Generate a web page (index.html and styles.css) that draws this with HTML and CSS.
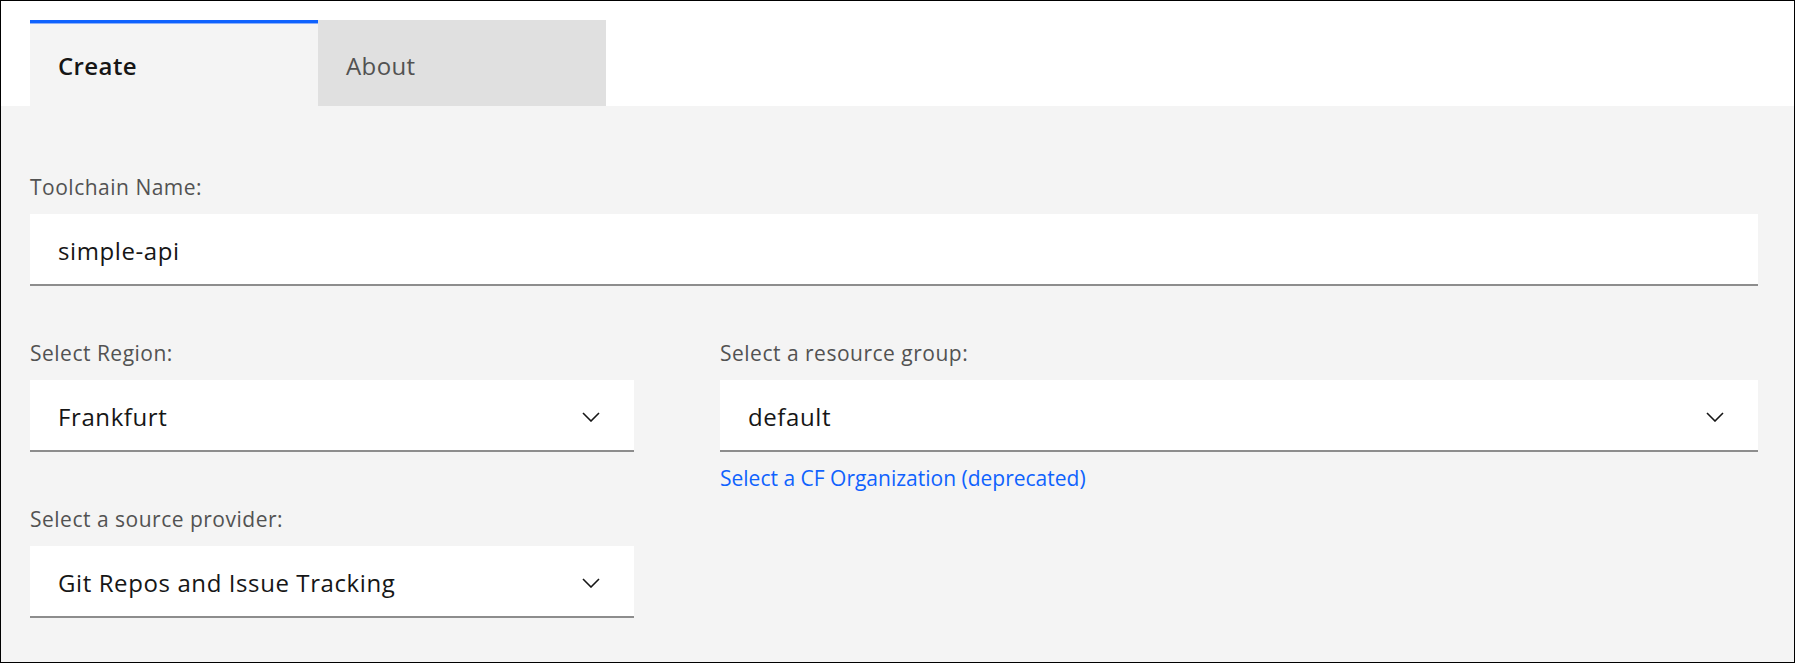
FILE: index.html
```html
<!DOCTYPE html>
<html lang="en">
<head>
<meta charset="utf-8">
<title>Toolchain</title>
<link rel="stylesheet" href="styles.css">
</head>
<body>
<div class="frame">
  <div class="tabs">
    <div class="tab tab-active">Create</div>
    <div class="tab">About</div>
  </div>
  <div class="panel">
    <div class="field">
      <div class="label">Toolchain Name:</div>
      <div class="input">simple-api</div>
    </div>
    <div class="columns">
      <div class="col">
        <div class="field">
          <div class="label">Select Region:</div>
          <div class="input select">
            <span>Frankfurt</span>
            <svg class="chev" width="18" height="10" viewBox="0 0 18 10"><polyline points="1,1 9,9 17,1" fill="none" stroke="#161616" stroke-width="1.6"/></svg>
          </div>
        </div>
        <div class="field">
          <div class="label">Select a source provider:</div>
          <div class="input select">
            <span>Git Repos and Issue Tracking</span>
            <svg class="chev" width="18" height="10" viewBox="0 0 18 10"><polyline points="1,1 9,9 17,1" fill="none" stroke="#161616" stroke-width="1.6"/></svg>
          </div>
        </div>
      </div>
      <div class="col">
        <div class="field">
          <div class="label">Select a resource group:</div>
          <div class="input select">
            <span>default</span>
            <svg class="chev" width="18" height="10" viewBox="0 0 18 10"><polyline points="1,1 9,9 17,1" fill="none" stroke="#161616" stroke-width="1.6"/></svg>
          </div>
          <a class="link" href="#">Select a CF Organization (deprecated)</a>
        </div>
      </div>
    </div>
  </div>
</div>
</body>
</html>
```
FILE: styles.css
```css
* { box-sizing: border-box; }
html, body { margin: 0; padding: 0; background: #fff; }
body { font-family: "Open Sans", Roboto, sans-serif; color: #161616; }

.frame {
  width: 1795px;
  height: 663px;
  border: 1px solid #000;
  display: flex;
  flex-direction: column;
  background: #fff;
}

.tabs {
  display: flex;
  padding: 19px 0 0 29px;
}
.tab {
  width: 288px;
  height: 86px;
  background: #e0e0e0;
  color: #525252;
  font-size: 24px;
  line-height: 30px;
  letter-spacing: 0.4px;
  display: flex;
  align-items: center;
  padding: 6px 0 0 28px;
}
.tab-active {
  background: #f4f4f4;
  color: #161616;
  font-weight: 600;
  border-top: 3px solid #0f62fe;
  box-shadow: inset 0 1px 0 #8db0f9;
  padding-top: 3px;
}

.panel {
  flex: 1;
  background: #f4f4f4;
  padding: 68px 36px 0 29px;
  display: flex;
  flex-direction: column;
  gap: 54px;
}

.field {
  display: flex;
  flex-direction: column;
}
.label {
  font-size: 21px;
  line-height: 27px;
  letter-spacing: 0.5px;
  color: #525252;
  margin-bottom: 13px;
}
.input {
  height: 72px;
  background: #fff;
  border-bottom: 2px solid #8d8d8d;
  font-size: 24px;
  line-height: 30px;
  letter-spacing: 0.6px;
  display: flex;
  align-items: center;
  padding: 3px 34px 0 28px;
  color: #161616;
}
.select { justify-content: space-between; }
.chev { display: block; }

.columns {
  display: grid;
  grid-template-columns: 604px 1fr;
  column-gap: 86px;
}
.col {
  display: flex;
  flex-direction: column;
  gap: 54px;
}
.link {
  margin-top: 13px;
  font-size: 21px;
  line-height: 27px;
  color: #0f62fe;
  text-decoration: none;
}
```
